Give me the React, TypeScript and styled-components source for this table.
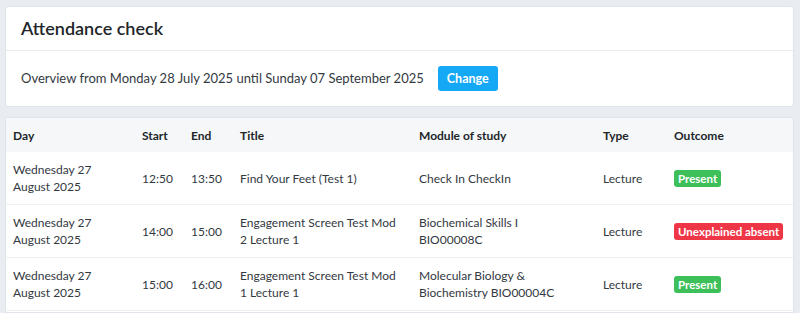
import React from 'react'
import styled, { createGlobalStyle } from 'styled-components'

const GlobalStyle = createGlobalStyle`
  body {
    margin: 0;
    background: #e9edf2;
    font-family: Lato, "Liberation Sans", Arial, sans-serif;
    color: #33393f;
  }
`

interface Session {
  day: string
  start: string
  end: string
  title: string
  module: string
  type: string
  outcome: 'present' | 'absent'
}

const sessions: Session[] = [
  {
    day: 'Wednesday 27 August 2025',
    start: '12:50',
    end: '13:50',
    title: 'Find Your Feet (Test 1)',
    module: 'Check In CheckIn',
    type: 'Lecture',
    outcome: 'present',
  },
  {
    day: 'Wednesday 27 August 2025',
    start: '14:00',
    end: '15:00',
    title: 'Engagement Screen Test Mod 2 Lecture 1',
    module: 'Biochemical Skills I BIO00008C',
    type: 'Lecture',
    outcome: 'absent',
  },
  {
    day: 'Wednesday 27 August 2025',
    start: '15:00',
    end: '16:00',
    title: 'Engagement Screen Test Mod 1 Lecture 1',
    module: 'Molecular Biology & Biochemistry BIO00004C',
    type: 'Lecture',
    outcome: 'present',
  },
]

const columns = [
  { label: 'Day', width: 129 },
  { label: 'Start', width: 49 },
  { label: 'End', width: 49 },
  { label: 'Title', width: 179 },
  { label: 'Module of study', width: 184 },
  { label: 'Type', width: 71 },
  { label: 'Outcome', width: 128 },
]

export default function App() {
  return (
    <Page>
      <GlobalStyle />
      <Card>
        <CardHeader>
          <Heading>Attendance check</Heading>
        </CardHeader>
        <CardBody>
          <span>Overview from Monday 28 July 2025 until Sunday 07 September 2025</span>
          <ChangeButton>Change</ChangeButton>
        </CardBody>
      </Card>
      <TableCard>
        <Table>
          <colgroup>
            {columns.map((c) => (
              <col key={c.label} style={{ width: c.width }} />
            ))}
          </colgroup>
          <thead>
            <tr>
              {columns.map((c) => (
                <Th key={c.label}>{c.label}</Th>
              ))}
            </tr>
          </thead>
          <tbody>
            {sessions.map((s, i) => (
              <tr key={i}>
                <Td>{s.day}</Td>
                <Td>{s.start}</Td>
                <Td>{s.end}</Td>
                <Td>{s.title}</Td>
                <Td>{s.module}</Td>
                <Td>{s.type}</Td>
                <Td>
                  <Badge $tone={s.outcome}>
                    {s.outcome === 'present' ? 'Present' : 'Unexplained absent'}
                  </Badge>
                </Td>
              </tr>
            ))}
          </tbody>
        </Table>
      </TableCard>
    </Page>
  )
}

const Page = styled.div`
  min-height: 100vh;
  box-sizing: border-box;
  padding: 6px 6px 0 5px;
  display: flex;
  flex-direction: column;
  gap: 10px;
`

const Card = styled.div`
  background: #fff;
  border: 1px solid #dfe4ea;
  border-radius: 3px;
  overflow: hidden;
`

const TableCard = styled(Card)`
  flex: 1;
  border-bottom-left-radius: 0;
  border-bottom-right-radius: 0;
`

const CardHeader = styled.div`
  padding: 11px 15px;
  border-bottom: 1px solid #e8ecf0;
`

const Heading = styled.h1`
  margin: 0;
  font-size: 18px;
  line-height: 21px;
  font-weight: 600;
  color: #222629;
`

const CardBody = styled.div`
  display: flex;
  align-items: center;
  gap: 14px;
  padding: 15px 15px;
  font-size: 13px;
  line-height: 25px;
`

const ChangeButton = styled.button`
  height: 25px;
  width: 60px;
  padding: 0;
  border: none;
  border-radius: 3px;
  background: #14a8f5;
  color: #fff;
  font-family: inherit;
  font-size: 12.5px;
  font-weight: 700;
  cursor: pointer;
`

const Table = styled.table`
  width: 100%;
  table-layout: fixed;
  border-collapse: collapse;
  font-size: 12px;
`

const Th = styled.th`
  text-align: left;
  padding: 9px 14px 8px 7px;
  line-height: 17px;
  font-weight: 700;
  color: #222629;
  background: #f5f7f9;
`

const Td = styled.td`
  padding: 9px 14px 9px 7px;
  line-height: 17px;
  vertical-align: middle;
  border-bottom: 1px solid #eef1f4;
`

const Badge = styled.span<{ $tone: 'present' | 'absent' }>`
  display: inline-block;
  white-space: nowrap;
  padding: 0 4px;
  border-radius: 3px;
  font-size: 11.5px;
  line-height: 17px;
  font-weight: 700;
  color: #fff;
  background: ${(p) => (p.$tone === 'present' ? '#3dbf5a' : '#ef3647')};
`
